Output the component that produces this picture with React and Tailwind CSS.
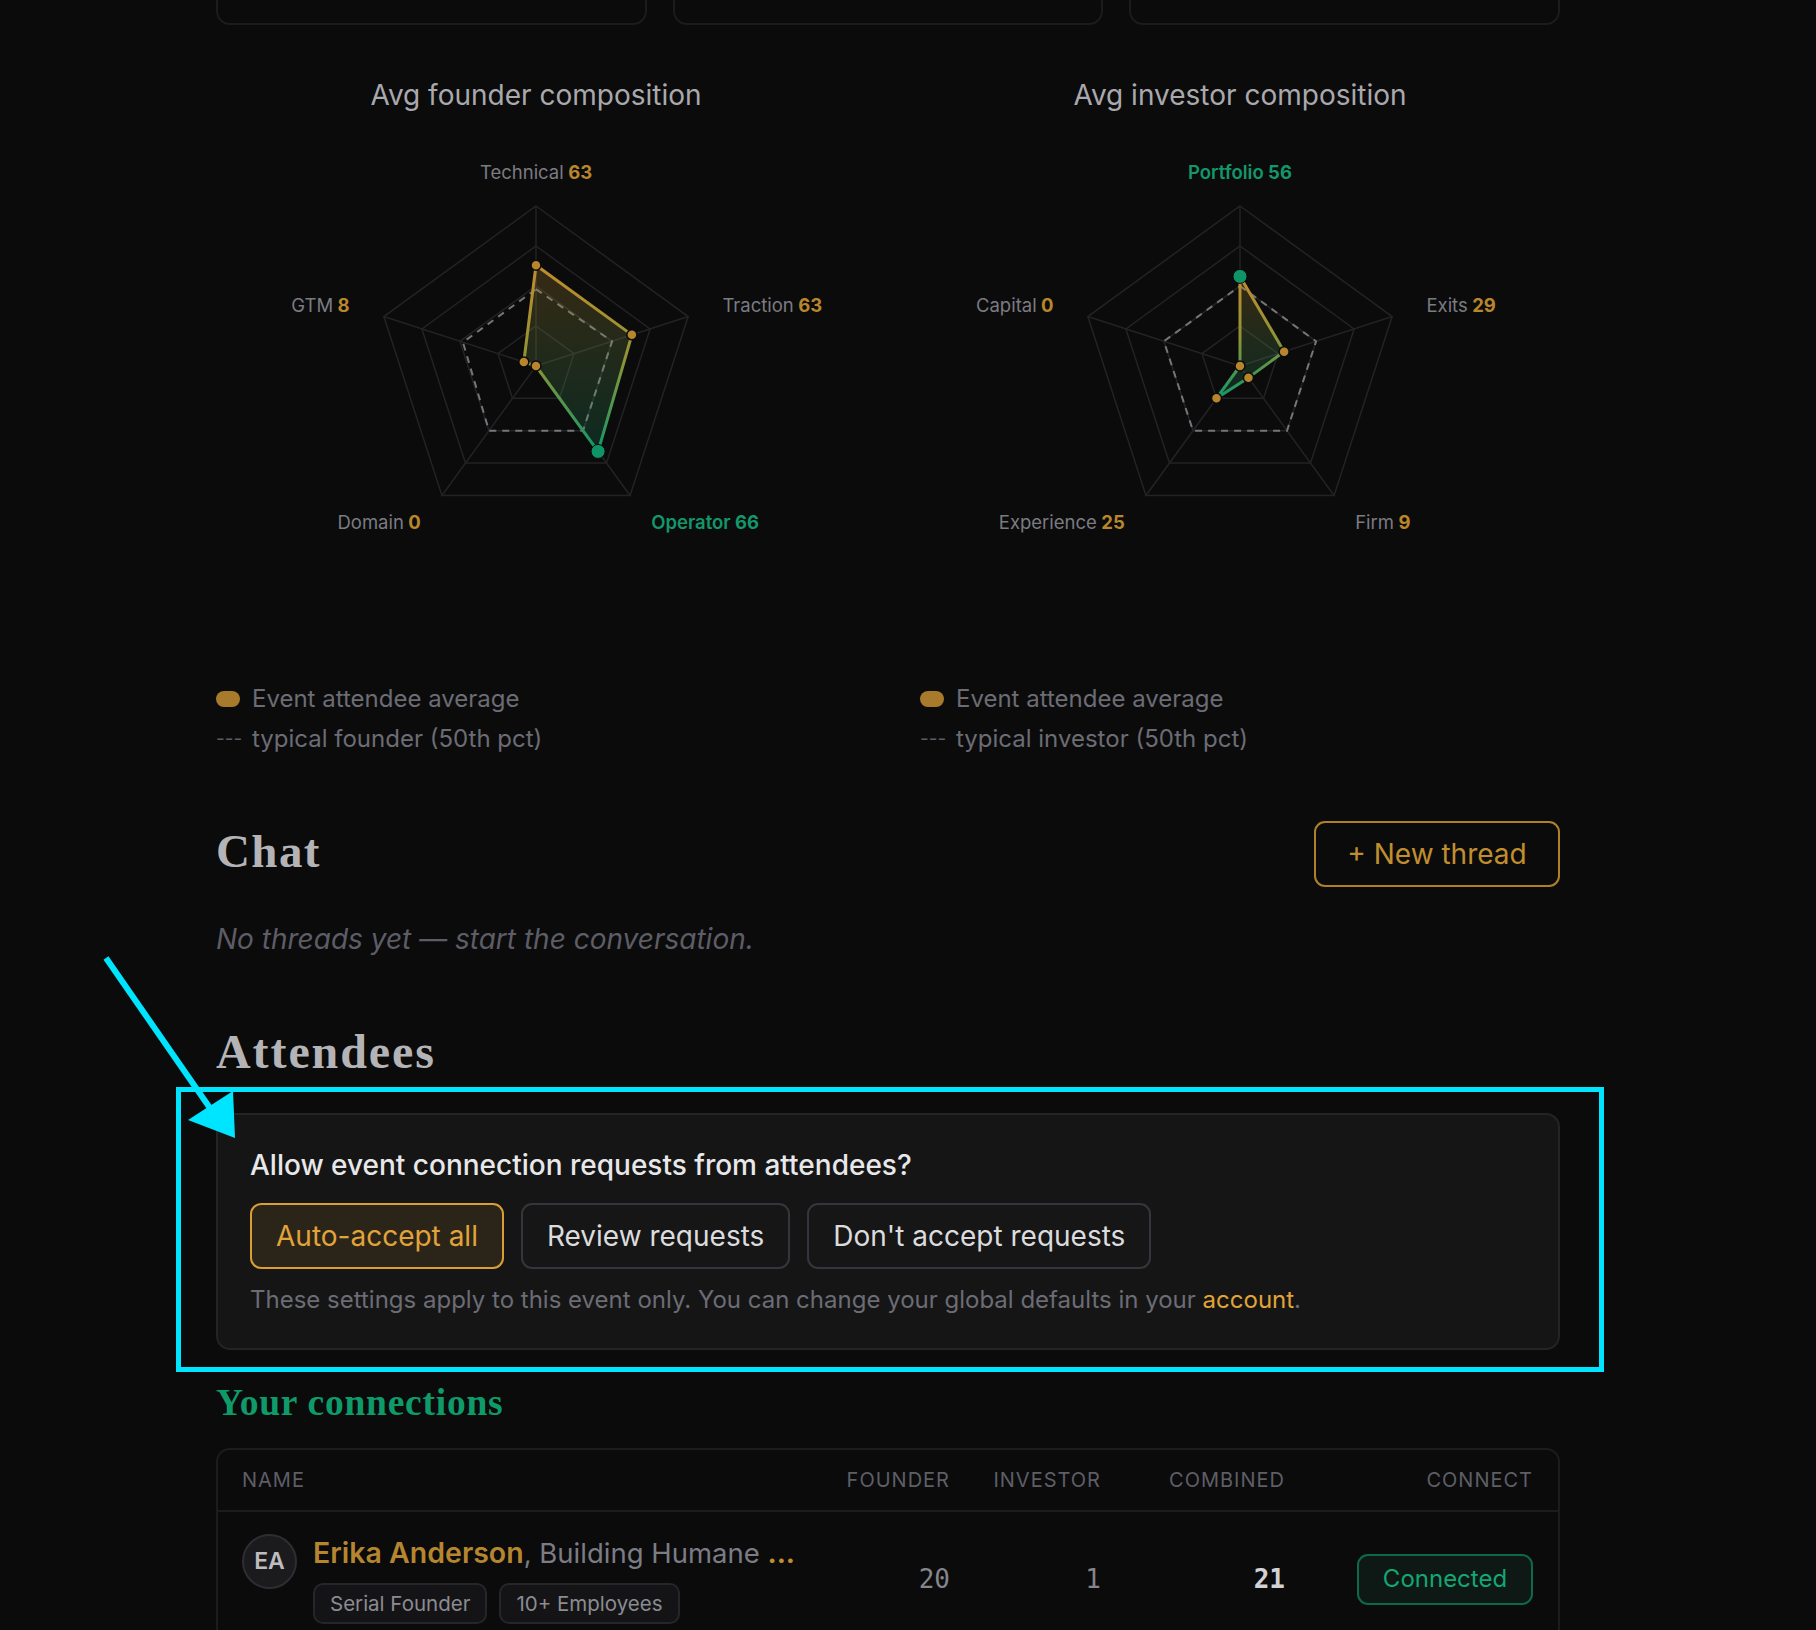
import React from "react";

const founderAxes = [
  { label: "Technical", value: 63, typical: 48 },
  { label: "Traction", value: 63, typical: 50 },
  { label: "Operator", value: 66, typical: 50 },
  { label: "Domain", value: 0, typical: 50 },
  { label: "GTM", value: 8, typical: 48 },
];

const investorAxes = [
  { label: "Portfolio", value: 56, typical: 50 },
  { label: "Exits", value: 29, typical: 50 },
  { label: "Firm", value: 9, typical: 50 },
  { label: "Experience", value: 25, typical: 50 },
  { label: "Capital", value: 0, typical: 50 },
];

const anchors = ["middle", "start", "start", "end", "end"];
// small per-axis baseline nudges for the labels
const labelShift = [4, 2, -1, -1, 2];

function Radar({ id, axes }) {
  const cx = 320;
  const cy = 251;
  const R = 160;
  const angle = (i) => ((-90 + i * 72) * Math.PI) / 180;
  const pt = (i, v) => [cx + Math.cos(angle(i)) * (R * v) / 100, cy + Math.sin(angle(i)) * (R * v) / 100];
  const ring = (v) => axes.map((_, i) => pt(i, v).join(",")).join(" ");
  const top = axes.reduce((m, a, i) => (a.value > axes[m].value ? i : m), 0);

  return (
    <svg width="640" height="567" viewBox="0 0 640 567" className="block">
      <defs>
        <linearGradient id={`${id}-stroke`} x1="0" y1="0" x2="0" y2="1">
          <stop offset="0%" stopColor="#c28b2c" />
          <stop offset="50%" stopColor="#8f9435" />
          <stop offset="100%" stopColor="#12976a" />
        </linearGradient>
        <linearGradient id={`${id}-fill`} x1="0" y1="0" x2="0" y2="1">
          <stop offset="0%" stopColor="#c28b2c" stopOpacity="0.24" />
          <stop offset="100%" stopColor="#12976a" stopOpacity="0.22" />
        </linearGradient>
      </defs>

      {[25, 50, 75, 100].map((v) => (
        <polygon key={v} points={ring(v)} fill="none" stroke="#232326" strokeWidth="1.5" />
      ))}
      {axes.map((_, i) => {
        const [x, y] = pt(i, 100);
        return <line key={i} x1={cx} y1={cy} x2={x} y2={y} stroke="#232326" strokeWidth="1.5" />;
      })}

      <polygon
        points={axes.map((a, i) => pt(i, a.typical).join(",")).join(" ")}
        fill="none"
        stroke="#75757a"
        strokeWidth="2"
        strokeDasharray="7 6"
      />

      <polygon
        points={axes.map((a, i) => pt(i, a.value).join(",")).join(" ")}
        fill={`url(#${id}-fill)`}
        stroke={`url(#${id}-stroke)`}
        strokeWidth="3"
        strokeLinejoin="round"
      />

      {axes.map((a, i) => {
        const [x, y] = pt(i, a.value);
        return i === top ? null : (
          <circle key={i} cx={x} cy={y} r="5" fill="#b8842c" stroke="#0b0b0c" strokeWidth="1.5" />
        );
      })}
      {(() => {
        const [x, y] = pt(top, axes[top].value);
        return <circle cx={x} cy={y} r="7" fill="#0f9468" stroke="#0b0b0c" strokeWidth="1" />;
      })()}

      {axes.map((a, i) => {
        const d = 196;
        const x = cx + Math.cos(angle(i)) * d;
        const y = cy + Math.sin(angle(i)) * d + labelShift[i];
        const hot = i === top;
        return (
          <text
            key={a.label}
            x={x}
            y={y}
            textAnchor={anchors[i]}
            dominantBaseline="middle"
            fontSize="18.5"
            fontFamily="Inter, sans-serif"
          >
            <tspan fill={hot ? "#12976a" : "#7b7b82"} fontWeight={hot ? 600 : 400}>
              {a.label}
            </tspan>
            <tspan fill={hot ? "#12976a" : "#b8862b"} fontWeight="700">
              {" "}
              {a.value}
            </tspan>
          </text>
        );
      })}
    </svg>
  );
}

function ChartColumn({ id, title, axes, typicalLabel }) {
  return (
    <div className="flex flex-col">
      <h3 className="text-center text-[28px] leading-[40px] text-[#a9a9ad]">{title}</h3>
      <div className="flex justify-center">
        <Radar id={id} axes={axes} />
      </div>
      <div className="flex flex-col gap-[6px] text-[24px] leading-[34px] text-[#6c6c74]">
        <div className="flex items-center gap-3">
          <span className="h-4 w-6 shrink-0 rounded-full bg-[#a87a2c]" />
          <span>Event attendee average</span>
        </div>
        <div className="flex items-center gap-3">
          <span className="w-6 shrink-0 whitespace-nowrap text-[19px] text-[#5b5b62]">---</span>
          <span>{typicalLabel}</span>
        </div>
      </div>
    </div>
  );
}

function ChoiceButton({ active, children }) {
  return (
    <button
      type="button"
      className={
        active
          ? "h-[66px] rounded-[11px] border-2 border-[#d99e34] bg-[#2b2519] px-[24px] text-[28px] text-[#e2a33a]"
          : "h-[66px] rounded-[11px] border-2 border-[#35353b] bg-[#161617] px-[24px] text-[28px] text-[#dcdcde]"
      }
    >
      {children}
    </button>
  );
}

export default function App() {
  return (
    <div className="min-h-screen bg-[#0b0b0c] font-['Inter',sans-serif]">
      <div className="ml-[216px] w-[1344px] pb-10">
        {/* stat cards, scrolled mostly out of view */}
        <div className="grid grid-cols-3 gap-[26px]">
          {[0, 1, 2].map((i) => (
            <div key={i} className="h-[25px] rounded-b-[14px] border-x-2 border-b-2 border-[#1c1c1f]" />
          ))}
        </div>

        <div className="mt-[50px] grid grid-cols-2 gap-16">
          <ChartColumn
            id="founder"
            title="Avg founder composition"
            axes={founderAxes}
            typicalLabel="typical founder (50th pct)"
          />
          <ChartColumn
            id="investor"
            title="Avg investor composition"
            axes={investorAxes}
            typicalLabel="typical investor (50th pct)"
          />
        </div>

        {/* chat */}
        <div className="mt-[65px] flex items-center justify-between">
          <h2 className="pb-[6px] font-['Liberation_Serif',serif] text-[47px] font-semibold leading-[54px] tracking-[0.03em] text-[#b4b4b6]">
            Chat
          </h2>
          <button
            type="button"
            className="h-[66px] w-[246px] rounded-[11px] border-2 border-[#b08029] text-[28px] text-[#c18e2f]"
          >
            + New thread
          </button>
        </div>
        <p className="mt-[34px] text-[28px] italic leading-[36px] text-[#5d5d66]">
          No threads yet — start the conversation.
        </p>

        {/* attendees */}
        <h2 className="mt-[68px] font-['Liberation_Serif',serif] text-[48px] font-bold leading-[54px] tracking-[0.04em] text-[#b4b4b6]">
          Attendees
        </h2>

        <div className="relative mt-[34px] rounded-[14px] border-2 border-[#242427] bg-[#151516] px-[32px] pb-[32px] pt-[30px]">
          <p className="text-[28px] font-medium leading-[40px] text-[#e8e8ea]">
            Allow event connection requests from attendees?
          </p>
          <div className="mt-[18px] flex gap-[17px]">
            <ChoiceButton active>Auto-accept all</ChoiceButton>
            <ChoiceButton>Review requests</ChoiceButton>
            <ChoiceButton>Don't accept requests</ChoiceButton>
          </div>
          <p className="mt-[15px] text-[24px] leading-[32px] text-[#6c6c75]">
            These settings apply to this event only. You can change your global defaults in your{" "}
            <span className="text-[#e2a437]">account</span>.
          </p>

          {/* highlight frame and pointer */}
          <div className="pointer-events-none absolute -bottom-[24px] -left-[42px] -right-[46px] -top-[28px] border-[5px] border-[#00e5ff]" />
          <svg
            className="pointer-events-none absolute -left-[122px] -top-[167px]"
            width="160"
            height="200"
            viewBox="0 0 160 200"
          >
            <line x1="10" y1="10" x2="116" y2="163" stroke="#00e5ff" strokeWidth="6" />
            <polygon points="139,190 92,172 137,143" fill="#00e5ff" />
          </svg>
        </div>

        <h3 className="mt-[31px] font-['Liberation_Serif',serif] text-[37.5px] font-bold leading-[43px] tracking-[0.02em] text-[#0f9a69]">
          Your connections
        </h3>

        <div className="mt-[24px] rounded-[14px] border-2 border-[#1c1c1f]">
          <div className="grid grid-cols-[578px_130px_151px_184px_248px] border-b-2 border-[#1c1c1f] px-6 py-[14px] text-[20px] uppercase leading-[32px] tracking-[0.05em] text-[#5e5e66]">
            <span>Name</span>
            <span className="text-right">Founder</span>
            <span className="text-right">Investor</span>
            <span className="text-right">Combined</span>
            <span className="text-right">Connect</span>
          </div>

          <div className="grid grid-cols-[578px_130px_151px_184px_248px] items-center px-6 pb-6 pt-[22px]">
            <div className="flex items-start gap-4">
              <div className="flex h-[55px] w-[55px] shrink-0 items-center justify-center rounded-full border-2 border-[#2e2e32] bg-[#1b1b1e] text-[23px] font-semibold text-[#bdbdc0]">
                EA
              </div>
              <div className="flex flex-col gap-[11px]">
                <p className="whitespace-nowrap text-[27.5px] leading-[38px] text-[#7c7c84]">
                  <span className="text-[28.5px] font-semibold text-[#b5852f]">Erika Anderson</span>, Building
                  Humane <span className="font-bold text-[#c18e2f]">...</span>
                </p>
                <div className="flex gap-3">
                  <span className="rounded-[10px] border-2 border-[#26262a] bg-[#141416] px-[15px] text-[20.5px] leading-[37px] text-[#8b8b92]">
                    Serial Founder
                  </span>
                  <span className="rounded-[10px] border-2 border-[#26262a] bg-[#141416] px-[15px] text-[20.5px] leading-[37px] text-[#8b8b92]">
                    10+ Employees
                  </span>
                </div>
              </div>
            </div>
            <span className="text-right font-['DejaVu_Sans_Mono',monospace] text-[26px] text-[#85858b]">20</span>
            <span className="text-right font-['DejaVu_Sans_Mono',monospace] text-[26px] text-[#85858b]">1</span>
            <span className="text-right font-['DejaVu_Sans_Mono',monospace] text-[26px] font-bold text-[#d2d2d4]">
              21
            </span>
            <div className="flex justify-end">
              <span className="flex h-[51px] w-[176px] items-center justify-center rounded-[11px] border-2 border-[#0d6a48] bg-[#0e1814] text-[24px] text-[#14a673]">
                Connected
              </span>
            </div>
          </div>
        </div>
      </div>
    </div>
  );
}
